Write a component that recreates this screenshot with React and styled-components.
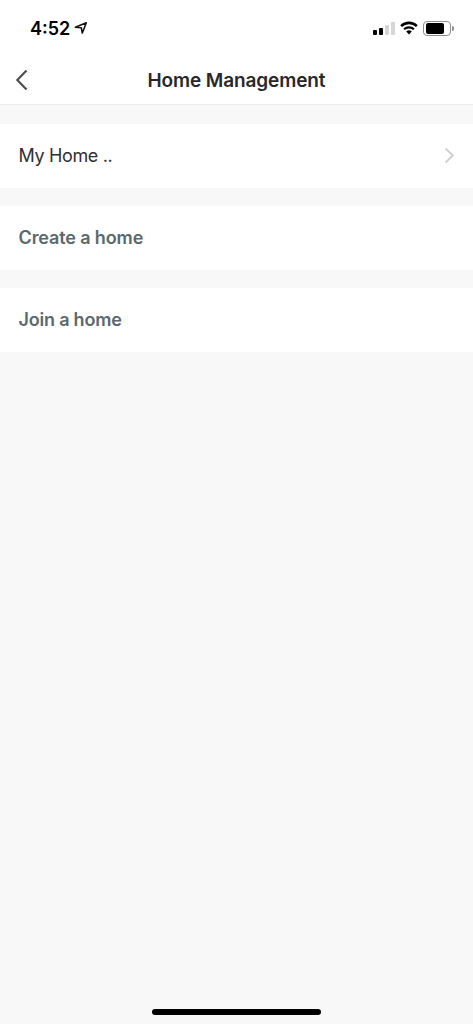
import styled, { createGlobalStyle } from 'styled-components';

const App = () => {
    return (
        <Screen>
            <GlobalStyle />
            <StatusBar>
                <Clock>
                    <span>4:52</span>
                    <svg width="14" height="14" viewBox="0 0 14 14" fill="none">
                        <path d="M1.4 6.3 L12.3 1.8 L8.3 12 L7.3 6.8 Z" stroke="#111" strokeWidth="1.6" strokeLinejoin="round" />
                    </svg>
                </Clock>
                <Indicators>
                    <Signal>
                        <Bar $height={5} />
                        <Bar $height={7} />
                        <Bar $height={10} $off />
                        <Bar $height={13} $off />
                    </Signal>
                    <svg width="18" height="14" viewBox="0 0 18 14">
                        <path d="M1.1 5.1 A11.3 11.3 0 0 1 16.9 5.1" fill="none" stroke="#000" strokeWidth="2.6" />
                        <path d="M4.1 8.3 A7 7 0 0 1 13.9 8.3" fill="none" stroke="#000" strokeWidth="2.3" />
                        <path d="M6.2 10.6 A4.1 4.1 0 0 1 11.8 10.6 L9 13.5 Z" fill="#000" />
                    </svg>
                    <Battery>
                        <Shell><Charge /></Shell>
                        <Tip />
                    </Battery>
                </Indicators>
            </StatusBar>
            <Header>
                <Back aria-label="Back">
                    <svg width="14" height="22" viewBox="0 0 14 22" fill="none">
                        <path d="M11.5 1.5 L2.3 11 L11.5 20.5" stroke="#4b4b4d" strokeWidth="2.1" />
                    </svg>
                </Back>
                <Title>Home Management</Title>
            </Header>
            <List>
                <Row>
                    <HomeName>My Home ..</HomeName>
                    <svg width="11" height="18" viewBox="0 0 11 18" fill="none">
                        <path d="M1.6 1.5 L8.8 8.5 L1.6 15.5" stroke="#cfcfcf" strokeWidth="1.8" />
                    </svg>
                </Row>
                <Row>
                    <Action $spacing="-0.12px">Create a home</Action>
                </Row>
                <Row>
                    <Action $spacing="-0.2px">Join a home</Action>
                </Row>
            </List>
            <HomeIndicator />
        </Screen>
    )
}

const GlobalStyle = createGlobalStyle`
    body {
        margin: 0;
        background: #f8f8f8;
    }
    * {
        box-sizing: border-box;
    }
`;

const Screen = styled.div`
    display: flex;
    flex-direction: column;
    height: 100vh;
    background: #f8f8f8;
    font-family: Inter, "Liberation Sans", sans-serif;
    overflow: hidden;
`;

const StatusBar = styled.div`
    display: flex;
    justify-content: space-between;
    align-items: center;
    height: 56px;
    flex: none;
    padding: 0 19px 0 30px;
    background: #fff;
`;

const Clock = styled.div`
    display: flex;
    align-items: center;
    gap: 4px;
    font-size: 18px;
    font-weight: 600;
    line-height: 22px;
    color: #000;
    span {
        padding-top: 2px;
    }
`;

const Indicators = styled.div`
    display: flex;
    align-items: center;
    gap: 5px;
`;

const Signal = styled.div`
    display: flex;
    align-items: flex-end;
    gap: 2px;
    height: 13px;
`;

const Bar = styled.span`
    width: 4px;
    height: ${props => props.$height}px;
    border-radius: 1px;
    background: ${props => props.$off ? '#d6d6d6' : '#000'};
`;

const Battery = styled.div`
    display: flex;
    align-items: center;
    gap: 1px;
`;

const Shell = styled.div`
    width: 28px;
    height: 15px;
    padding: 1px;
    border: 1px solid #8e8e8e;
    border-radius: 4px;
`;

const Charge = styled.div`
    width: 18px;
    height: 11px;
    margin-left: 1px;
    border-radius: 2px;
    background: #000;
`;

const Tip = styled.span`
    width: 2px;
    height: 5px;
    border-radius: 0 2px 2px 0;
    background: #8e8e8e;
`;

const Header = styled.div`
    display: grid;
    grid-template-columns: 40px 1fr 40px;
    align-items: center;
    height: 49px;
    flex: none;
    background: #fff;
    border-bottom: 1px solid #ececec;
`;

const Back = styled.button`
    display: flex;
    padding: 0 0 0 15px;
    border: none;
    background: none;
    cursor: pointer;
`;

const Title = styled.h1`
    margin: 0;
    padding-top: 2px;
    font-size: 19px;
    font-weight: 600;
    line-height: 24px;
    letter-spacing: -0.12px;
    text-align: center;
    white-space: nowrap;
    color: #28282b;
`;

const List = styled.div`
    display: flex;
    flex-direction: column;
    gap: 18px;
    margin-top: 19px;
`;

const Row = styled.div`
    display: flex;
    align-items: center;
    justify-content: space-between;
    height: 64px;
    padding: 0 18px 0 18.5px;
    background: #fff;
`;

const HomeName = styled.span`
    font-size: 18px;
    line-height: 24px;
    letter-spacing: -0.35px;
    color: #303033;
`;

const Action = styled.span`
    font-size: 18px;
    font-weight: 600;
    line-height: 24px;
    letter-spacing: ${props => props.$spacing};
    color: #5b696e;
`;

const HomeIndicator = styled.div`
    width: 169px;
    height: 6px;
    flex: none;
    margin: auto auto 9px;
    border-radius: 3px;
    background: #000;
`;

export default App;
